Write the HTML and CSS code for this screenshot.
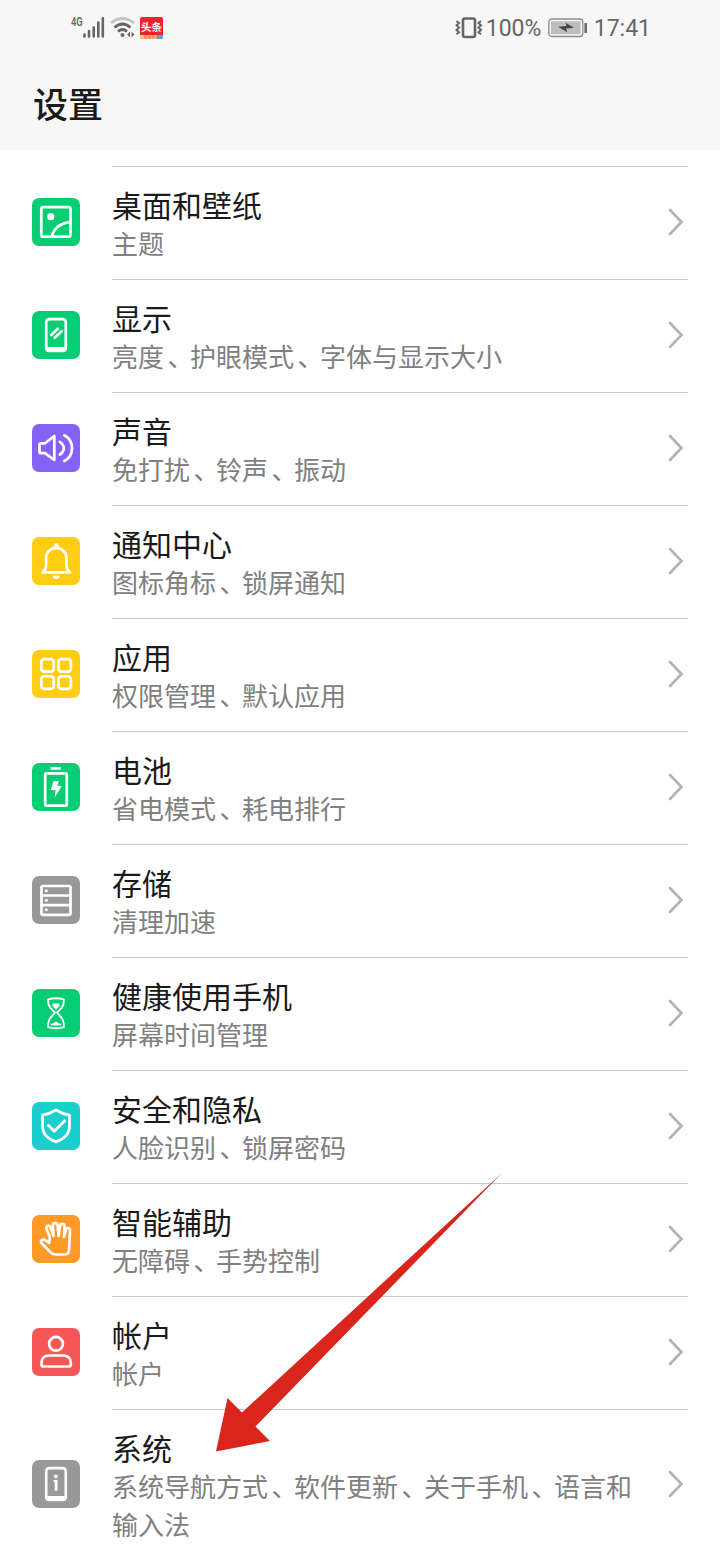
FILE: index.html
```html
<!DOCTYPE html>
<html lang="zh-CN">
<head>
<meta charset="utf-8">
<title>设置</title>
<link rel="stylesheet" href="styles.css">
</head>
<body>
<header class="header">
  <div class="status">
    <div class="status-left">
      <span class="net">4G</span>
      <svg class="signal" width="22" height="22" viewBox="0 0 22 22"><path d="M1.500 17.500v2M6 14v5.500M10.700 10.500v9M15.300 5.500v14M19.800 1.300v18.200" /></svg>
      <svg class="wifi" width="26" height="22" viewBox="0 0 26 22"><path class="faint" d="M1 6Q12.500-3 24 6"/><path d="M4.500 10.500Q12.500 3.500 20.500 10.500M8 14.500Q12.500 10.500 17 14.500"/><circle cx="12.500" cy="18" r="2"/><path class="fill" d="M20 14.500v6l-3-3zM21.500 14.500v6l3-3z"/></svg>
      <span class="news"><b>头条</b><i>百度热点</i></span>
    </div>
    <div class="status-right">
      <svg class="vibrate" width="28" height="22" viewBox="0 0 28 22"><rect x="8" y="1.500" width="12" height="18.500" rx="2"/><path class="zig" d="M1.500 4l2.500 2-2.500 2.300 2.500 2.300-2.500 2.300 2.500 2.300-2.500 2M26 4l-2.500 2 2.500 2.300-2.500 2.300 2.500 2.300-2.500 2.300 2.500 2"/></svg>
      <span class="percent">100%</span>
      <svg class="battery" width="39" height="20" viewBox="0 0 39 20"><rect class="case" x=".8" y="1" width="34" height="17.500" rx="3"/><rect class="level" x="3" y="3.200" width="29.600" height="13" rx="1"/><path class="bolt" d="M10 8.800l8.500-.8-1-3.200 8.500 5-8 .7 1.200 3.700z"/><path class="cap" d="M37.700 5v10"/></svg>
      <span class="clock">17:41</span>
    </div>
  </div>
  <h1 class="heading">设置</h1>
</header>
<main class="list">
  <section class="row">
    <svg class="tile green" viewBox="0 0 48 48"><rect x="9.300" y="9.200" width="29.200" height="29.500" rx="2"/><circle class="solid" cx="18.700" cy="18.700" r="3.600"/><path d="M19.700 38.500Q23.500 25.500 38.500 24.200"/></svg>
    <div class="body"><div class="text"><h2>桌面和壁纸</h2><p>主题</p></div><svg class="chevron" viewBox="0 0 16 28"><path d="M2 2l11.500 12L2 26"/></svg></div>
  </section>
  <section class="row">
    <svg class="tile green" viewBox="0 0 48 48"><rect x="14.200" y="8.200" width="19.600" height="31.800" rx="3"/><path class="solid" d="M14 36h20v3a2 2 0 0 1-2 2H16a2 2 0 0 1-2-2z"/><path d="M19.200 24l6.500-6.300M22.800 26.800l6.700-6.500"/></svg>
    <div class="body"><div class="text"><h2>显示</h2><p>亮度<span class="sep">、</span>护眼模式<span class="sep">、</span>字体与显示大小</p></div><svg class="chevron" viewBox="0 0 16 28"><path d="M2 2l11.500 12L2 26"/></svg></div>
  </section>
  <section class="row">
    <svg class="tile purple" viewBox="0 0 48 48"><path d="M9 19.300h4L22.300 12v24L13 29.200H9a1.500 1.500 0 0 1-1.500-1.500v-7A1.500 1.500 0 0 1 9 19.300zM27.800 17.800q4 2.700 4 6.400t-4 6.400M32.300 11.300Q40 15.500 40 24.200T32.300 37"/></svg>
    <div class="body"><div class="text"><h2>声音</h2><p>免打扰<span class="sep">、</span>铃声<span class="sep">、</span>振动</p></div><svg class="chevron" viewBox="0 0 16 28"><path d="M2 2l11.500 12L2 26"/></svg></div>
  </section>
  <section class="row">
    <svg class="tile yellow" viewBox="0 0 48 48"><path d="M10.500 35.300h27.600q-3.600-2.500-3.600-6.500V21a10.200 10.200 0 0 0-20.400 0v7.800q0 4-3.600 6.500z"/><circle class="solid" cx="24.300" cy="8.500" r="2.300"/><path class="solid" d="M20.800 38.800h7q-.5 3.200-3.500 3.200t-3.500-3.200z"/></svg>
    <div class="body"><div class="text"><h2>通知中心</h2><p>图标角标<span class="sep">、</span>锁屏通知</p></div><svg class="chevron" viewBox="0 0 16 28"><path d="M2 2l11.500 12L2 26"/></svg></div>
  </section>
  <section class="row">
    <svg class="tile yellow" viewBox="0 0 48 48"><rect x="9.300" y="9.200" width="12.400" height="12.400" rx="2.800"/><rect x="26.500" y="9.200" width="12.400" height="12.400" rx="2.800"/><rect x="9.300" y="26.400" width="12.400" height="12.400" rx="2.800"/><rect x="26.500" y="26.400" width="12.400" height="12.400" rx="2.800"/></svg>
    <div class="body"><div class="text"><h2>应用</h2><p>权限管理<span class="sep">、</span>默认应用</p></div><svg class="chevron" viewBox="0 0 16 28"><path d="M2 2l11.500 12L2 26"/></svg></div>
  </section>
  <section class="row">
    <svg class="tile green" viewBox="0 0 48 48"><path class="solid" d="M18.500 4h10.300v2.800H18.500z"/><rect x="13.200" y="10.300" width="21.600" height="32.400" rx="1.500"/><path class="solid" d="M21.500 18h5.300l-1.500 4.700 4.500.3-7.200 11.500 1-7.300-4.800-.2z"/></svg>
    <div class="body"><div class="text"><h2>电池</h2><p>省电模式<span class="sep">、</span>耗电排行</p></div><svg class="chevron" viewBox="0 0 16 28"><path d="M2 2l11.500 12L2 26"/></svg></div>
  </section>
  <section class="row">
    <svg class="tile gray" viewBox="0 0 48 48"><rect x="9.500" y="10" width="29" height="28.800" rx="1.500"/><path d="M10 19.500h28M10 29.200h28"/><circle class="solid" cx="14.300" cy="14.700" r="1.500"/><circle class="solid" cx="14.300" cy="24.300" r="1.500"/><circle class="solid" cx="14.300" cy="33.800" r="1.500"/></svg>
    <div class="body"><div class="text"><h2>存储</h2><p>清理加速</p></div><svg class="chevron" viewBox="0 0 16 28"><path d="M2 2l11.500 12L2 26"/></svg></div>
  </section>
  <section class="row">
    <svg class="tile green" viewBox="0 0 48 48"><path class="thin" d="M16 10.500Q24 8 32 10.500q0 5.500-2.500 8.500L25 23.700l4.500 5Q32 32 32 38q-8 2.500-16 0 0-6 2.500-9.300l4.500-5-4.500-4.700Q16 16 16 10.500z"/><path class="solid" d="M24 20.500l-3.500-3.500q-.8-3 1.700-2.800Q23.500 14.300 24 15.300q.5-1 1.800-1.100 2.500-.2 1.700 2.800zM18 36q2-2 4-2.300 2-1.800 4 0 2 .3 4 2.300-6 1.200-12 0z"/></svg>
    <div class="body"><div class="text"><h2>健康使用手机</h2><p>屏幕时间管理</p></div><svg class="chevron" viewBox="0 0 16 28"><path d="M2 2l11.500 12L2 26"/></svg></div>
  </section>
  <section class="row">
    <svg class="tile cyan" viewBox="0 0 48 48"><path d="M24 8q6.500 4 13.500 5.200v11.300Q37.500 35 24 39.800 10.500 35 10.500 24.500V13.200Q17.500 12 24 8z"/><path d="M16.300 23.200l6 6L32.700 18.700"/></svg>
    <div class="body"><div class="text"><h2>安全和隐私</h2><p>人脸识别<span class="sep">、</span>锁屏密码</p></div><svg class="chevron" viewBox="0 0 16 28"><path d="M2 2l11.500 12L2 26"/></svg></div>
  </section>
  <section class="row">
    <svg class="tile orange" viewBox="0 0 48 48"><path d="M17.800 22.300L14.600 14c-1-3.400 2.800-4.500 3.900-1.700l3 8.700L20.900 10.500c0-3.200 4.400-3.200 4.800 0L26.600 21l1.500-10.200c.6-3 4.700-2.500 4.500.6L31.900 22l2-7.300c1-2.600 4.300-1.800 4.100 1L37 35.300q-.3 4.200-4.500 4.200H23.500q-2.500 0-4.500-1.800L10 28.700c-2.500-2.800.6-5 3.200-3.500l4 2.700z"/></svg>
    <div class="body"><div class="text"><h2>智能辅助</h2><p>无障碍<span class="sep">、</span>手势控制</p></div><svg class="chevron" viewBox="0 0 16 28"><path d="M2 2l11.500 12L2 26"/></svg></div>
  </section>
  <section class="row">
    <svg class="tile red" viewBox="0 0 48 48"><circle cx="24" cy="15.800" r="6.900"/><path d="M9.500 36.500V35q0-7.500 8-7.500h13.300q8 0 8 7.500v1.500q0 2-2 2H11.500q-2 0-2-2z"/></svg>
    <div class="body"><div class="text"><h2>帐户</h2><p>帐户</p></div><svg class="chevron" viewBox="0 0 16 28"><path d="M2 2l11.500 12L2 26"/></svg></div>
  </section>
  <section class="row">
    <svg class="tile gray" viewBox="0 0 48 48"><rect x="14.200" y="8.200" width="19.600" height="31.800" rx="3"/><path class="solid" d="M14 36h20v3a2 2 0 0 1-2 2H16a2 2 0 0 1-2-2z"/><circle class="solid" cx="23.900" cy="16.400" r="1.900"/><path class="solid" d="M21.500 20h4v10.500h-2.800v-8.700h-1.200z"/></svg>
    <div class="body"><div class="text"><h2>系统</h2><p>系统导航方式<span class="sep">、</span>软件更新<span class="sep">、</span>关于手机<span class="sep">、</span>语言和输入法</p></div><svg class="chevron" viewBox="0 0 16 28"><path d="M2 2l11.500 12L2 26"/></svg></div>
  </section>
</main>
<svg class="arrow" viewBox="0 0 286 279"><path d="M0 278.500L11.500 225 26 239.500 286 0 39.500 253.500 54 268z"/></svg>
</body>
</html>
```
FILE: styles.css
```css
* { box-sizing: border-box; }
body {
  position: relative;
  width: 720px;
  height: 1560px;
  margin: 0;
  overflow: hidden;
  background: #fff;
  color: #1a1a1a;
  font-family: "Noto Sans CJK SC", sans-serif;
}
h1, h2, p { margin: 0; font-weight: 400; }
svg { display: block; flex: none; }

.header { height: 150px; background: #f7f7f7; }
.status {
  display: flex;
  justify-content: space-between;
  height: 56px;
  padding: 0 69px 0 71px;
  color: #666;
  font-family: Roboto, sans-serif;
}
.status-left { display: flex; align-items: flex-start; padding-top: 16px; }
.status-right { display: flex; align-items: center; font-size: 23px; }
.status svg { fill: none; stroke: #666; }
.net {
  width: 12px;
  font: 600 12.5px/12px Roboto, sans-serif;
  white-space: nowrap;
  transform: scaleX(.75);
  transform-origin: left;
}
.signal { margin-top: 1px; stroke-width: 2.6; stroke-linecap: round; }
.wifi { margin-left: 5px; margin-top: 1px; stroke-width: 2.7; }
.wifi .faint { stroke: #c4c4c4; }
.wifi circle, .wifi .fill { fill: #666; stroke: none; }
.news {
  display: flex;
  flex-direction: column;
  width: 23px;
  height: 22px;
  margin: 1px 0 0 4px;
  overflow: hidden;
  border-radius: 2px;
  background: #e8252b;
  color: #fff;
  font-family: "Noto Sans CJK SC", sans-serif;
}
.news b { height: 18px; font-size: 10.5px; line-height: 19px; text-align: center; white-space: nowrap; }
.news i {
  height: 4px;
  background: linear-gradient(90deg, #f7c77c 75%, #27b9e8 75%);
  color: #e5453a;
  font-size: 4px;
  font-style: normal;
  line-height: 4px;
  text-align: center;
}
.vibrate { stroke-width: 2.6; }
.vibrate .zig { stroke-width: 2; }
.percent { width: 57px; margin-left: 3px; }
.battery { margin-left: 5px; }
.battery .case { stroke: #8a8a8a; stroke-width: 1.3; }
.battery .level { fill: #bdbdbd; stroke: none; }
.battery .bolt { fill: #444; stroke: none; }
.battery .cap { stroke-width: 2.5; }
.clock { margin-left: 7px; }
.heading { padding-left: 33px; font-size: 35px; font-weight: 500; line-height: 94px; }

.list { padding: 16px 32px 0; }
.row { display: flex; align-items: center; gap: 32px; }
.tile {
  width: 48px;
  height: 48px;
  margin-bottom: 1px;
  border-radius: 7px;
  fill: none;
  stroke: #fff;
  stroke-width: 2.7;
  stroke-linejoin: round;
  stroke-linecap: round;
}
.tile .solid { fill: #fff; stroke: none; }
.tile .thin { stroke-width: 1.8; }
.green { background: #07ce75; }
.purple { background: #8661f5; }
.yellow { background: #ffce14; }
.gray { background: #999; }
.cyan { background: #1bcfcc; }
.orange { background: #ff9a26; }
.red { background: #f55656; }
.body {
  display: flex;
  flex: 1;
  align-items: center;
  min-height: 113px;
  padding: 18px 4px 17px 0;
  border-top: 1px solid #c9c9c9;
}
.text { flex: 1; }
.text h2 { padding-bottom: 1px; font-size: 30px; line-height: 38px; }
.text p { width: 530px; color: #808080; font-size: 26px; line-height: 38px; }
/* Half-width enumeration comma, spaced out to one full em */
.sep { margin: 0 9.500px 0 3.500px; font-feature-settings: "halt"; }
.chevron { width: 16px; height: 28px; margin: -3px 0 0 -6px; fill: none; stroke: #b2b2b2; stroke-width: 2.6; stroke-linecap: round; }
.arrow { position: absolute; left: 216px; top: 1173px; width: 286px; height: 279px; fill: #da251d; }
```
